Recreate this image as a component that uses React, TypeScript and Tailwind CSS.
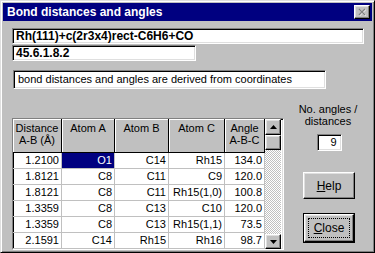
const raised =
  "border border-t-white border-l-white border-r-black border-b-black bg-[#c0c0c0] shadow-[inset_-1px_-1px_#808080,inset_1px_1px_#dfdfdf]"
const sunken =
  "border border-t-[#808080] border-l-[#808080] border-r-white border-b-white shadow-[inset_1px_1px_#000,inset_-1px_-1px_#dfdfdf]"

const rows = [
  ["1.2100", "O1", "C14", "Rh15", "134.0"],
  ["1.8121", "C8", "C11", "C9", "120.0"],
  ["1.8121", "C8", "C11", "Rh15(1,0)", "100.8"],
  ["1.3359", "C8", "C13", "C10", "120.0"],
  ["1.3359", "C8", "C13", "Rh15(1,1)", "73.5"],
  ["2.1591", "C14", "Rh15", "Rh16", "98.7"],
]

const cols = ["w-[49px]", "w-[53px]", "w-[54px]", "w-[56px]", "w-[40px]"]

const Arrow = ({ down }: { down?: boolean }) => (
  <svg width="7" height="4" viewBox="0 0 7 4">
    <path d={down ? "M0 0h7L3.5 4z" : "M3.5 0L7 4H0z"} fill="#000" />
  </svg>
)

const App = () => {
  return (
    <div
      className="w-[375px] h-[253px] overflow-hidden bg-[#c0c0c0] border border-t-[#dfdfdf] border-l-[#dfdfdf] border-r-black border-b-black shadow-[inset_1px_1px_#fff,inset_-1px_-1px_#808080] p-[2px] text-black"
      style={{ fontFamily: '"Liberation Sans", Arial, sans-serif' }}
    >
      {/* title bar */}
      <div className="h-[18px] bg-[#000080] flex items-center justify-between pl-[4px] pr-[2px]">
        <span className="text-white font-bold text-[12px] leading-none">Bond distances and angles</span>
        <div className={`${raised} w-[16px] h-[14px] flex items-center justify-center`}>
          <svg width="9" height="8" viewBox="0 0 9 8">
            <path d="M1.5 1.5l6 6M7.5 1.5l-6 6" stroke="#fff" strokeWidth="1.4" />
            <path d="M1 1l6 6M7 1l-6 6" stroke="#808080" strokeWidth="1.4" />
          </svg>
        </div>
      </div>

      <div className="pl-[9px] pt-[7px]">
        <div className={`${sunken} bg-white w-[352px] h-[16px] pl-[3px] flex items-center`}>
          <span className="font-bold text-[12px] leading-none">Rh(111)+c(2r3x4)rect-C6H6+CO</span>
        </div>
        <div className={`${sunken} bg-white mt-[1px] w-[184px] h-[16px] pl-[3px] flex items-center`}>
          <span className="font-bold text-[12px] leading-none">45.6.1.8.2</span>
        </div>
        <div className={`${sunken} bg-white ml-[1px] mt-[9px] w-[313px] h-[19px] pl-[4px] flex items-center`}>
          <span className="text-[11px] leading-none">bond distances and angles are derived from coordinates</span>
        </div>
      </div>

      <div className="flex pl-[9px]">
        {/* grid */}
        <div className={`${sunken} mt-[29px] w-[272px] h-[132px] bg-white flex overflow-hidden`}>
          <div className="flex flex-col">
            <div className="flex h-[34px] shrink-0 bg-[#c0c0c0] border-b border-black text-[11px] leading-[12px]">
              {[
                ["Distance", "A-B (Å)"],
                ["Atom A"],
                ["Atom B"],
                ["Atom C"],
                ["Angle", "A-B-C"],
              ].map((h, i) => (
                <div
                  key={i}
                  className={`${cols[i]} border-r border-black flex flex-col items-center pt-[3px] shadow-[inset_1px_1px_#fff]`}
                >
                  {h.map((t) => (
                    <span key={t}>{t}</span>
                  ))}
                </div>
              ))}
            </div>
            {rows.map((r, ri) => (
              <div key={ri} className="flex h-[16px] shrink-0 border-b border-[#c0c0c0] text-[11px]">
                {r.map((c, ci) => (
                  <div
                    key={ci}
                    className={`${cols[ci]} border-r border-[#c0c0c0] flex items-center justify-end pr-[2px] leading-none ${
                      ri === 0 && ci === 1 ? "bg-[#000080] text-white" : ""
                    }`}
                  >
                    {c}
                  </div>
                ))}
              </div>
            ))}
          </div>

          {/* scrollbar */}
          <div className="w-[16px] flex flex-col">
            <div className={`${raised} w-[16px] h-[16px] shrink-0 flex items-center justify-center`}>
              <Arrow />
            </div>
            <div className={`${raised} w-[16px] h-[15px] shrink-0`} />
            <div className="flex-1 bg-[repeating-conic-gradient(#c0c0c0_0_25%,#fff_0_50%)] bg-[length:2px_2px]" />
            <div className={`${raised} w-[16px] h-[15px] shrink-0 flex items-center justify-center`}>
              <Arrow down />
            </div>
          </div>
        </div>

        {/* right column */}
        <div className="flex-1 flex flex-col items-center pt-[14px] text-[11px]">
          <div className="text-center leading-[12px]">
            No. angles /<br />
            distances
          </div>
          <div className={`${sunken} bg-white mt-[7px] ml-[2px] w-[25px] h-[17px] flex items-center justify-end pr-[4px] leading-none`}>
            9
          </div>
          <button className={`${raised} mt-[21px] ml-[2px] w-[52px] h-[27px] flex items-center justify-center text-[12px]`}>
            <span>
              <span className="underline">H</span>elp
            </span>
          </button>
          <div className="mt-[14px] ml-[2px] border border-black">
            <button className={`${raised} w-[50px] h-[28px] flex items-center justify-center p-[3px] text-[12px]`}>
              <span className="w-full h-full border border-dotted border-black flex items-center justify-center">
                <span>
                  <span className="underline">C</span>lose
                </span>
              </span>
            </button>
          </div>
        </div>
      </div>
    </div>
  )
}

export default App
